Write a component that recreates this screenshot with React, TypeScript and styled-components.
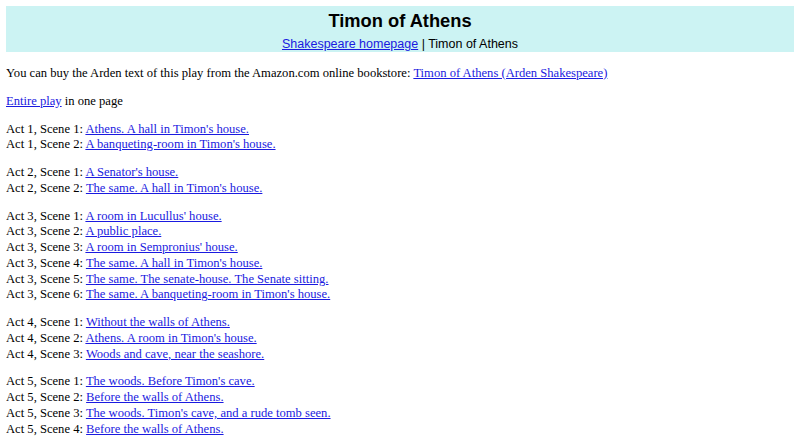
import React from 'react'
import styled, { createGlobalStyle } from 'styled-components'

const GlobalStyle = createGlobalStyle`
  html, body {
    margin: 0;
    padding: 0;
    background: #ffffff;
  }
  body {
    margin: 6px;
    font-family: "Liberation Serif", "Times New Roman", serif;
    font-size: 12.6px;
    line-height: 15.75px;
    color: #000000;
  }
`

type Scene = { act: number; scene: number; title: string }

const acts: Scene[][] = [
  [
    { act: 1, scene: 1, title: "Athens. A hall in Timon's house." },
    { act: 1, scene: 2, title: "A banqueting-room in Timon's house." },
  ],
  [
    { act: 2, scene: 1, title: "A Senator's house." },
    { act: 2, scene: 2, title: "The same. A hall in Timon's house." },
  ],
  [
    { act: 3, scene: 1, title: "A room in Lucullus' house." },
    { act: 3, scene: 2, title: 'A public place.' },
    { act: 3, scene: 3, title: "A room in Sempronius' house." },
    { act: 3, scene: 4, title: "The same. A hall in Timon's house." },
    { act: 3, scene: 5, title: 'The same. The senate-house. The Senate sitting.' },
    { act: 3, scene: 6, title: "The same. A banqueting-room in Timon's house." },
  ],
  [
    { act: 4, scene: 1, title: 'Without the walls of Athens.' },
    { act: 4, scene: 2, title: "Athens. A room in Timon's house." },
    { act: 4, scene: 3, title: 'Woods and cave, near the seashore.' },
  ],
  [
    { act: 5, scene: 1, title: "The woods. Before Timon's cave." },
    { act: 5, scene: 2, title: 'Before the walls of Athens.' },
    { act: 5, scene: 3, title: "The woods. Timon's cave, and a rude tomb seen." },
    { act: 5, scene: 4, title: 'Before the walls of Athens.' },
  ],
]

export default function App() {
  return (
    <>
      <GlobalStyle />
      <Header>
        <PlayTitle>Timon of Athens</PlayTitle>
        <Nav>
          <Link href="#">Shakespeare homepage</Link> | Timon of Athens
        </Nav>
      </Header>
      <Para>
        You can buy the Arden text of this play from the Amazon.com online bookstore:{' '}
        <Link href="#">Timon of Athens (Arden Shakespeare)</Link>
      </Para>
      <Para>
        <Link href="#">Entire play</Link> in one page
      </Para>
      {acts.map((list, i) => (
        <Para key={i}>
          {list.map((s) => (
            <SceneLine key={s.scene}>
              Act {s.act}, Scene {s.scene}: <Link href="#">{s.title}</Link>
            </SceneLine>
          ))}
        </Para>
      ))}
    </>
  )
}

const Header = styled.div`
  background: #ccf3f3;
  height: 46px;
  box-sizing: border-box;
  padding-top: 4px;
  margin-bottom: 14px;
  display: flex;
  flex-direction: column;
  align-items: center;
  gap: 4px;
  font-family: "Liberation Sans", Arial, sans-serif;
`

const PlayTitle = styled.div`
  font-size: 18.3px;
  font-weight: bold;
  line-height: 22px;
`

const Nav = styled.div`
  font-size: 12.5px;
  line-height: 16px;
`

const Para = styled.div`
  margin: 12px 0;
`

const SceneLine = styled.div``

const Link = styled.a`
  color: #1a1ae0;
  text-decoration: underline;
`
